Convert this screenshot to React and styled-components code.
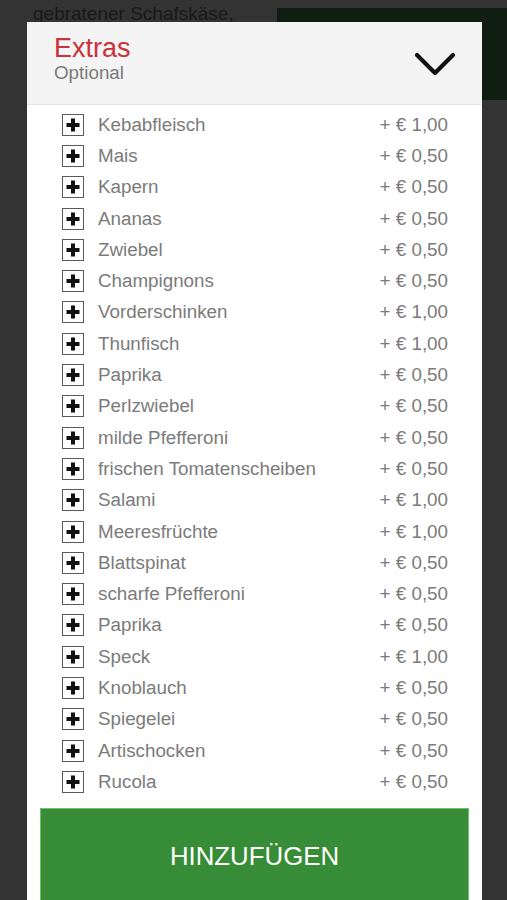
import React from 'react';
import styled, { createGlobalStyle } from 'styled-components';

const GlobalStyle = createGlobalStyle`
	html, body {
		margin: 0;
		padding: 0;
		background: #333333;
		font-family: "Liberation Sans", Arial, sans-serif;
		overflow: hidden;
	}
`;

// 모달 뒤에 깔린 페이지
const PageBlock = styled.div`
	position: relative;
	width: 507px;
	height: 900px;
	overflow: hidden;
	background: #333333;
`;

const BehindRow = styled.div`
	display: flex;
	align-items: flex-start;
	justify-content: space-between;
`;

const BehindText = styled.div`
	padding: 3px 0 0 33px;
	font-size: 19px;
	line-height: 22px;
	color: #191919;
	white-space: nowrap;
`;

const BehindButton = styled.div`
	margin-top: 8px;
	width: 230px;
	height: 92px;
	background: #0f1e10;
`;

const Modal = styled.div`
	position: absolute;
	top: 22px;
	left: 27px;
	width: 455px;
	bottom: 0;
	background: #ffffff;
	display: flex;
	flex-direction: column;
	overflow: hidden;
`;

const Header = styled.div`
	height: 83px;
	flex-shrink: 0;
	box-sizing: border-box;
	background: #f4f4f4;
	border-bottom: 1px solid #e4e4e4;
	display: flex;
	align-items: center;
	justify-content: space-between;
	padding: 0 26px 0 27px;
`;

const Titles = styled.div`
	display: flex;
	flex-direction: column;
	margin-bottom: 9px;
`;

const Title = styled.div`
	font-size: 27px;
	line-height: 28px;
	color: #c9323b;
`;

const Subtitle = styled.div`
	font-size: 18.8px;
	line-height: 22px;
	color: #7a7a7a;
`;

const List = styled.ul`
	list-style: none;
	flex-shrink: 0;
	margin: 0;
	padding: 4px 34px 0 35px;
`;

const Row = styled.li`
	display: flex;
	align-items: center;
	height: 31.3px;
	font-size: 18.8px;
	color: #7b7b7b;
`;

const CheckBox = styled.span`
	width: 22px;
	height: 22px;
	box-sizing: border-box;
	border: 1.5px solid #5a5a5a;
	display: flex;
	align-items: center;
	justify-content: center;
	margin-right: 14px;
	flex-shrink: 0;
`;

const Name = styled.span`
	flex: 1;
`;

const Price = styled.span`
	white-space: nowrap;
`;

const AddButton = styled.button`
	margin: 10px 13px 0;
	height: 98px;
	flex-shrink: 0;
	border: 1px solid #6fbf6f;
	background: #378c37;
	color: #ffffff;
	font-family: "Liberation Sans", Arial, sans-serif;
	font-size: 25.8px;
	display: flex;
	align-items: center;
	justify-content: center;
	padding: 0;
	cursor: pointer;
`;

const extras = [
	['Kebabfleisch', '1,00'],
	['Mais', '0,50'],
	['Kapern', '0,50'],
	['Ananas', '0,50'],
	['Zwiebel', '0,50'],
	['Champignons', '0,50'],
	['Vorderschinken', '1,00'],
	['Thunfisch', '1,00'],
	['Paprika', '0,50'],
	['Perlzwiebel', '0,50'],
	['milde Pfefferoni', '0,50'],
	['frischen Tomatenscheiben', '0,50'],
	['Salami', '1,00'],
	['Meeresfrüchte', '1,00'],
	['Blattspinat', '0,50'],
	['scharfe Pfefferoni', '0,50'],
	['Paprika', '0,50'],
	['Speck', '1,00'],
	['Knoblauch', '0,50'],
	['Spiegelei', '0,50'],
	['Artischocken', '0,50'],
	['Rucola', '0,50'],
];

const PlusIcon = () => (
	<svg width="14" height="14" viewBox="0 0 14 14">
		<path d="M5 0.5h4v4.5h4.5v4H9v4.5H5V9H0.5V5H5z" fill="#111" />
	</svg>
);

const Chevron = () => (
	<svg width="42" height="28" viewBox="0 0 42 28">
		<path d="M3 6l18 18L39 6" fill="none" stroke="#111" strokeWidth="4.2" strokeLinecap="round" strokeLinejoin="round" />
	</svg>
);

const App = () => {
	return (
		<PageBlock>
			<GlobalStyle />
			<BehindRow>
				<BehindText>gebratener Schafskäse,</BehindText>
				<BehindButton />
			</BehindRow>
			<Modal>
				<Header>
					<Titles>
						<Title>Extras</Title>
						<Subtitle>Optional</Subtitle>
					</Titles>
					<Chevron />
				</Header>
				<List>
					{extras.map(([name, price], i) => (
						<Row key={i}>
							<CheckBox>
								<PlusIcon />
							</CheckBox>
							<Name>{name}</Name>
							<Price>+ € {price}</Price>
						</Row>
					))}
				</List>
				<AddButton>HINZUFÜGEN</AddButton>
			</Modal>
		</PageBlock>
	);
};

export default App;
